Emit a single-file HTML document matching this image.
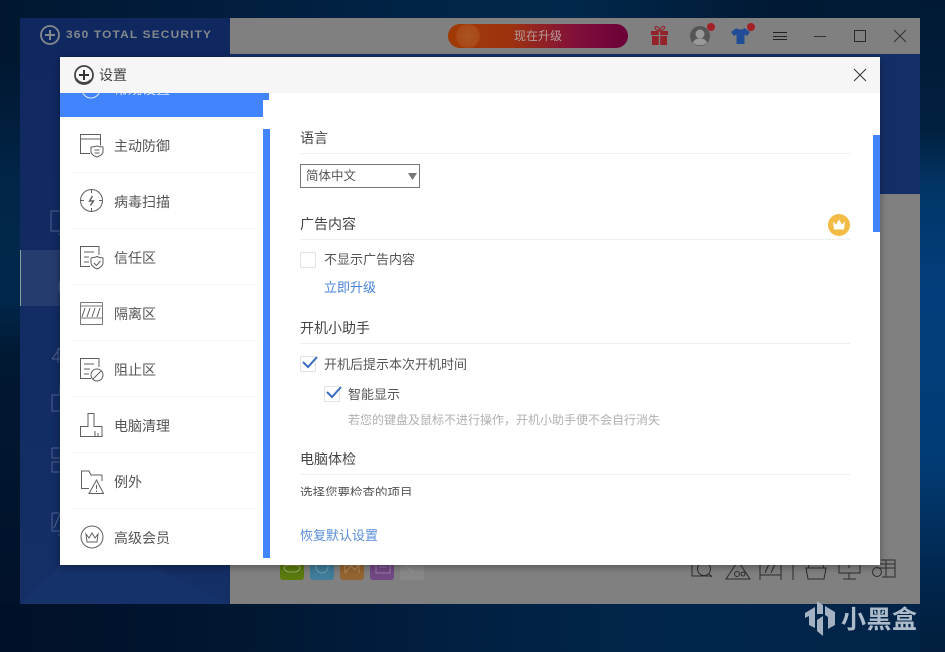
<!DOCTYPE html>
<html lang="zh"><head><meta charset="utf-8"><title>360 Total Security</title>
<style>
*{box-sizing:border-box}
html,body{margin:0;padding:0}
body{width:945px;height:652px;overflow:hidden;position:relative;background:#001a3a;font-family:"Liberation Sans","Noto Sans CJK SC",sans-serif;color:#555}
.a{position:absolute}
.t{position:absolute;white-space:nowrap;line-height:20px;height:20px}
.nav{font-size:14px;color:#555;left:114px}
.h{font-size:14px;color:#444;left:300px}
.ln{position:absolute;height:1px;background:#efefef;left:300px;width:550px}
.sep{position:absolute;height:1px;background:#f6f6f6;left:72px;width:185px}
.cb{position:absolute;width:16px;height:16px;border:1px solid #e2e2e2;background:#fff}
svg{position:absolute;overflow:visible;fill:none}
.ic{stroke:#5f5f5f;stroke-width:1;fill:none}
</style></head><body>
<!-- wallpaper -->
<div class="a" style="left:0;top:0;width:945px;height:60px;background:linear-gradient(90deg,#011730 0,#011e3e 25%,#01284c 60%,#011934 82%,#011b36 100%)"></div>
<div class="a" style="left:0;top:60px;width:20px;height:592px;background:linear-gradient(180deg,#011730 0,#01264a 22%,#01284c 40%,#011832 50%,#011028 100%)"></div>
<div class="a" style="left:920px;top:0;width:25px;height:652px;background:linear-gradient(180deg,#011934 0,#01203f 20%,#023668 29%,#033e7c 45%,#023c76 70%,#01264e 88%,#011e3c 100%)"></div>
<div class="a" style="left:0;top:604px;width:920px;height:48px;background:linear-gradient(90deg,#011028 0,#011630 25%,#012042 50%,#01264c 75%,#012347 100%)"></div>

<!-- app window -->
<div class="a" style="left:20px;top:18px;width:900px;height:586px;background:#132c62"></div>
<div class="a" style="left:20px;top:18px;width:210px;height:586px;background:linear-gradient(180deg,#102860 0,#122c64 60%,#142e66 100%)"></div>
<svg style="left:20px;top:480px" width="210" height="124"><path d="M0 124L70 55 210 124Z" fill="#16326a"/></svg>
<div class="a" style="left:230px;top:18px;width:690px;height:36px;background:#808080"></div>
<div class="a" style="left:230px;top:54px;width:690px;height:140px;background:#142f68"></div>
<div class="a" style="left:230px;top:194px;width:690px;height:410px;background:#808080"></div>
<div class="a" style="left:20px;top:250px;width:40px;height:56px;background:#253c6e"></div>
<div class="a" style="left:20px;top:250px;width:1px;height:56px;background:#8aa09a"></div>

<!-- logo -->
<svg style="left:40px;top:25px" width="20" height="20" viewBox="0 0 20 20"><circle cx="10" cy="10" r="9" stroke="#85898f" stroke-width="1.8"/><path d="M10 5v10M5 10h10" stroke="#85898f" stroke-width="2"/></svg>
<div class="t" style="left:66px;top:25px;font:bold 11px/20px 'Liberation Sans',sans-serif;letter-spacing:1.1px;color:#84888f;transform:scaleX(1.08);transform-origin:left">360 TOTAL SECURITY</div>

<!-- sidebar icons behind -->
<svg style="left:50px;top:208px" width="12" height="340" stroke="#4c6290" stroke-width="1"><path d="M1 3H10M1 3V23H10M8 26H10"/><circle cx="20" cy="79" r="11"/><path d="M2 151L10 140M2 151H10M8 140V155"/><path d="M2 187H10M2 187V203H10M10 187V177"/><path d="M2 240H10M2 240V250H10M2 254H10M2 254V264H10"/><path d="M2 305V323H10M2 305H10M4 320L10 306M8 327H10"/></svg>

<!-- top right -->
<div class="a" style="left:448px;top:24px;width:180px;height:24px;border-radius:12px;background:linear-gradient(90deg,#a03a04 0,#9c3210 35%,#82103a 70%,#6a0038 100%)"></div>
<div class="a" style="left:456px;top:24px;width:24px;height:24px;border-radius:12px;background:radial-gradient(circle,#ac5424 0,#a44210 100%)"></div>
<div class="t" style="left:514px;top:26px;font-size:12px;color:#b89c9c">现在升级</div>
<svg style="left:650px;top:25px" width="20" height="21" viewBox="0 0 20 21"><path d="M1 6h17v4H1zM2 11h15v9H2z" fill="#94222a"/><path d="M9.5 6V20" stroke="#808080" stroke-width="1.4"/><path d="M9.5 6C5 5 4 2 6 1.500S9.500 4 9.500 6C10 4 12 .5 14 1.500S14 5 9.500 6Z" stroke="#94222a" stroke-width="1.1"/></svg>
<svg style="left:689px;top:25px" width="22" height="22" viewBox="0 0 22 22"><circle cx="11" cy="11" r="10" fill="#555"/><circle cx="11" cy="9" r="4.500" fill="#999"/><path d="M4 18c1-4 4-4.500 7-4.500s6 .5 7 4.500c-4 3-10 3-14 0Z" fill="#999"/></svg>
<div class="a" style="left:707px;top:23px;width:8px;height:8px;border-radius:50%;background:#a22028"></div>
<svg style="left:730px;top:27px" width="21" height="18" viewBox="0 0 21 18"><path d="M6.500 1L1 5l3 4 2.500-1.500V17h8V7.500L17 9l3-4-5.500-4c-1 2-7 2-8 0Z" fill="#214c96"/></svg>
<div class="a" style="left:747px;top:23px;width:8px;height:8px;border-radius:50%;background:#a22028"></div>
<div class="a" style="left:773px;top:32px;width:14px;height:8px;border-top:1px solid #222;border-bottom:1px solid #222"></div>
<div class="a" style="left:773px;top:36px;width:14px;height:1px;background:#222"></div>
<div class="a" style="left:814px;top:36px;width:12px;height:1px;background:#333"></div>
<div class="a" style="left:854px;top:30px;width:12px;height:12px;border:1.2px solid #2a2a2a"></div>
<svg style="left:894px;top:30px" width="12" height="12" stroke="#333"><path d="M0 0L12 12M12 0L0 12"/></svg>

<!-- bottom app icons -->
<div class="a" style="left:280px;top:555px;width:24px;height:25px;border-radius:3px;background:#5a7a0e"></div>
<div class="a" style="left:310px;top:555px;width:24px;height:25px;border-radius:3px;background:#3f7d9a"></div>
<div class="a" style="left:340px;top:555px;width:24px;height:25px;border-radius:3px;background:#946430"></div>
<div class="a" style="left:370px;top:555px;width:24px;height:25px;border-radius:3px;background:#724884"></div>
<div class="a" style="left:400px;top:555px;width:24px;height:25px;border-radius:3px;background:#888"></div>
<svg style="left:280px;top:555px" width="144" height="25" stroke="#a8b47c" stroke-width=".8"><path d="M4 13c0-2 3-3 5-3h6c2 0 5 1 5 3s-3 4-5 4H9c-2 0-5-2-5-4Z"/><circle cx="42" cy="12" r="6" stroke="#80aabc"/><path d="M65 18V10h14v8M66 17l5-6 4 4 4-5" stroke="#bc9a6c"/><path d="M96 8h14v10H96zM99 12h8" stroke="#a48aac"/><path d="M125 9l8 9" stroke="#9a9a9a"/></svg>
<svg style="left:690px;top:555px" width="210" height="25" stroke="#2c2c2c" stroke-width="1"><path d="M2 5V21H22"/><circle cx="14" cy="14" r="6.500"/><path d="M19 19l3 3"/><path d="M36 24L48 6 60 24Z"/><circle cx="47" cy="19" r="2.500"/><circle cx="53" cy="19" r="2"/><path d="M70 5V25M91 5V25M70 8H91M70 20H91M75 18l4-9M81 18l4-9"/><path d="M103 5V25"/><path d="M116 13H136L134 24H118ZM118 13l2-5M134 13l-2-5"/><path d="M149 5V18H170V5M159 18V24M153 24H166M159 10V13"/><circle cx="187" cy="17" r="4.500"/><path d="M187 9H205V22H192M187 13H205M196 5V22M191 5H205V9"/></svg>

<!-- watermark -->
<svg style="left:804px;top:600px" width="32" height="36" viewBox="0 0 32 36"><path d="M1 13L11 7V28L5 25V16L1 18Z M13 1L19 5V14H13Z M19 16V36L13 31V20Z M21 6L31 12V25L24 29V17L21 15Z" fill="#a4b1c2"/></svg>
<div class="t" style="left:841px;top:602px;height:32px;font:bold 25px/32px 'Noto Sans CJK SC',sans-serif;color:#aebbca;letter-spacing:.5px">小黑盒</div>

<!-- dialog -->
<div class="a" style="left:60px;top:57px;width:820px;height:508px;background:#fff;box-shadow:0 2px 8px rgba(0,0,0,.35)"></div>
<div class="a" style="left:60px;top:93px;width:203px;height:24px;background:#4284fb"></div>
<div class="a" style="left:263px;top:93px;width:6px;height:7px;background:#4284fb"></div>
<div class="t" style="left:114px;top:79px;font-size:14px;color:#dfe9ff">常规设置</div>
<svg style="left:80px;top:78px" width="22" height="22" stroke="#dfe9ff"><circle cx="11" cy="11" r="9"/></svg>
<div class="a" style="left:60px;top:57px;width:820px;height:36px;background:#f6f6f6"></div>
<svg style="left:73px;top:64px" width="22" height="22" viewBox="0 0 22 22"><circle cx="11" cy="11" r="9" stroke="#444" stroke-width="1.800"/><path d="M11 6v10M6 11h10" stroke="#333" stroke-width="2"/><path d="M3 15c3 5 11 6 15 1" stroke="#444" stroke-width="2.600"/></svg>
<div class="t" style="left:99px;top:65px;font-size:14px;color:#444">设置</div>
<svg style="left:854px;top:69px" width="12" height="12" stroke="#333"><path d="M0 0L12 12M12 0L0 12"/></svg>

<div class="a" style="left:263px;top:129px;width:7px;height:429px;background:#4284fb"></div>
<div class="a" style="left:873px;top:135px;width:7px;height:97px;background:#4284fb"></div>

<!-- nav -->
<div class="sep" style="top:172px"></div><div class="sep" style="top:228px"></div><div class="sep" style="top:284px"></div><div class="sep" style="top:340px"></div><div class="sep" style="top:396px"></div><div class="sep" style="top:452px"></div><div class="sep" style="top:508px"></div>
<div class="t nav" style="top:136px">主动防御</div>
<div class="t nav" style="top:192px">病毒扫描</div>
<div class="t nav" style="top:248px">信任区</div>
<div class="t nav" style="top:304px">隔离区</div>
<div class="t nav" style="top:360px">阻止区</div>
<div class="t nav" style="top:416px">电脑清理</div>
<div class="t nav" style="top:472px">例外</div>
<div class="t nav" style="top:528px">高级会员</div>

<svg class="ic" style="left:80px;top:134px" width="24" height="24" viewBox="0 0 24 24"><path d="M10 19.500H.5V.5h20v11M.5 5H20.500"/><path d="M11 13c3 0 6-1 6-1s3 1 6 1v5c0 2-3 4-6 5-3-1-6-3-6-5Z" fill="#fff"/><path d="M14.500 16h5M14.500 19h5"/></svg>
<svg class="ic" style="left:80px;top:189px" width="24" height="24" viewBox="0 0 24 24"><circle cx="11.500" cy="11.500" r="11"/><path d="M11.500 0V4M11.500 19V23M0 11.500H4M19 11.500H23"/><path d="M12.500 7L9.500 12h4l-3 4.500" stroke-width="1.400"/></svg>
<svg class="ic" style="left:80px;top:246px" width="24" height="24" viewBox="0 0 24 24"><path d="M10 20.500H.5V.5H19V9M4 6H14M4 11H9M4 16H9"/><path d="M11 12c3 0 5-1 6-1.500 1 .5 3 1.500 6 1.500v5c0 2-3 5-6 6-3-1-6-4-6-6Z" fill="#fff"/><path d="M14 17l2.500 2.500L20.500 15"/></svg>
<svg class="ic" style="left:80px;top:302px" width="24" height="24" viewBox="0 0 24 24"><path d="M.5.500H22.500M.5 4H22.500M.5 16H22.500M.5 22.500H22.500M.5.500V22.500M22.500.500V22.500" stroke="#777"/><path d="M2 15l3-9M7 15l3-9M12 15l3-9M17 15l3-9"/></svg>
<svg class="ic" style="left:80px;top:358px" width="24" height="24" viewBox="0 0 24 24"><path d="M11 20.500H.5V.5H19V9M4 6H14M4 11H10M4 16H9"/><circle cx="17" cy="17" r="6" fill="#fff"/><path d="M13 21L21 13"/></svg>
<svg class="ic" style="left:80px;top:413px" width="24" height="24" viewBox="0 0 24 24"><path d="M.5 23.500V13.500H8V.5h6V13.500h8V23.500Z"/><path d="M15 23V18M18 23v-3"/></svg>
<svg class="ic" style="left:80px;top:470px" width="24" height="24" viewBox="0 0 24 24"><path d="M9 18.500H1.500V1H9l2 4h11V11"/><path d="M9 23.500L16.500 10 23.500 23.500Z" fill="#fff"/><path d="M16.500 15v4M16.500 20.500v1.500"/></svg>
<svg class="ic" style="left:80px;top:525px" width="24" height="24" viewBox="0 0 24 24"><circle cx="12" cy="12" r="11"/><path d="M6 9l3 4 3-5 3 5 3-4-1 8H7Z"/></svg>

<!-- content -->
<div class="t h" style="top:128px">语言</div><div class="ln" style="top:153px"></div>
<div class="a" style="left:300px;top:164px;width:120px;height:24px;border:1px solid #777;background:#fff"></div>
<div class="t" style="left:306px;top:166px;font-size:12.500px;color:#555">简体中文</div>
<svg style="left:408px;top:173px" width="9" height="7"><path d="M0 0H9L4.500 7Z" fill="#777"/></svg>

<div class="t h" style="top:214px">广告内容</div><div class="ln" style="top:239px"></div>
<div class="a" style="left:828px;top:214px;width:22px;height:22px;border-radius:50%;background:#f2bb45"></div>
<svg style="left:832px;top:217px" width="14" height="15" viewBox="0 0 14 14"><path d="M1 4l3 3 3-5 3 5 3-3-1 8H2Z" fill="#fff"/></svg>
<div class="cb" style="left:300px;top:252px"></div>
<div class="t" style="left:324px;top:250px;font-size:13px;color:#555">不显示广告内容</div>
<div class="t" style="left:324px;top:278px;font-size:13px;color:#4a82d8">立即升级</div>

<div class="t h" style="top:318px">开机小助手</div><div class="ln" style="top:343px"></div>
<div class="cb" style="left:300px;top:356px"></div>
<svg style="left:302px;top:356px" width="18" height="13" stroke="#3a6cc0" stroke-width="2"><path d="M1 6l5 5L15 1"/></svg>
<div class="t" style="left:324px;top:355px;font-size:13px;color:#555">开机后提示本次开机时间</div>
<div class="cb" style="left:324px;top:386px"></div>
<svg style="left:326px;top:386px" width="18" height="13" stroke="#3a6cc0" stroke-width="2"><path d="M1 6l5 5L15 1"/></svg>
<div class="t" style="left:348px;top:385px;font-size:13px;color:#555">智能显示</div>
<div class="t" style="left:348px;top:410px;font-size:12px;color:#b0b0b0">若您的键盘及鼠标不进行操作，开机小助手便不会自行消失</div>

<div class="t h" style="top:449px">电脑体检</div><div class="ln" style="top:474px"></div>
<div class="a" style="left:300px;top:476px;width:200px;height:20px;overflow:hidden"><div class="t" style="left:0;top:7px;font-size:12.500px;color:#555">选择您要检查的项目</div></div>
<div class="t" style="left:300px;top:526px;font-size:13px;color:#5a8cd8">恢复默认设置</div>
</body></html>
